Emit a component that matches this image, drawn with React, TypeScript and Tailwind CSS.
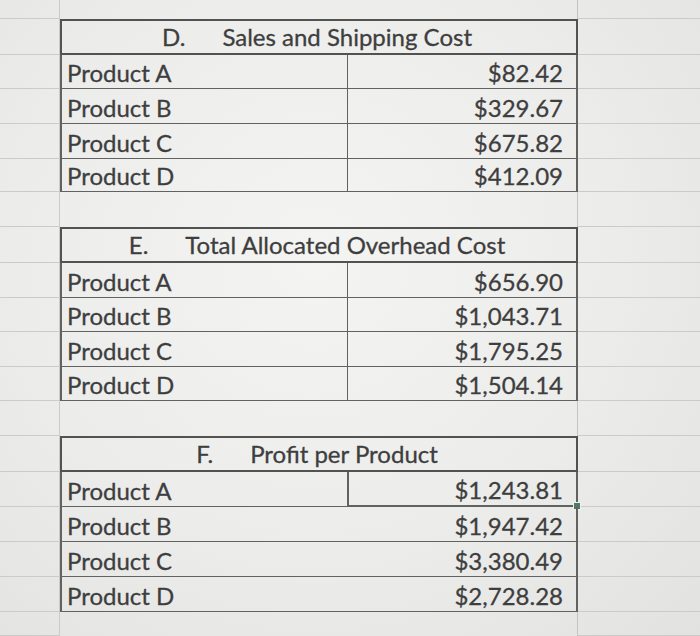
import React from 'react'

type Section = {
  letter: string
  title: string
  heights: string[]
  rows: [string, string][]
  divider: boolean
}

const sections: Section[] = [
  {
    letter: 'D.',
    title: 'Sales and Shipping Cost',
    heights: ['h-[36px]', 'h-[34px]', 'h-[35px]', 'h-[35px]', 'h-[33px]'],
    rows: [
      ['Product A', '$82.42'],
      ['Product B', '$329.67'],
      ['Product C', '$675.82'],
      ['Product D', '$412.09'],
    ],
    divider: true,
  },
  {
    letter: 'E.',
    title: 'Total Allocated Overhead Cost',
    heights: ['h-[36px]', 'h-[35px]', 'h-[34px]', 'h-[35px]', 'h-[34px]'],
    rows: [
      ['Product A', '$656.90'],
      ['Product B', '$1,043.71'],
      ['Product C', '$1,795.25'],
      ['Product D', '$1,504.14'],
    ],
    divider: true,
  },
  {
    letter: 'F.',
    title: 'Profit per Product',
    heights: ['h-[36px]', 'h-[35px]', 'h-[35px]', 'h-[35px]', 'h-[35px]'],
    rows: [
      ['Product A', '$1,243.81'],
      ['Product B', '$1,947.42'],
      ['Product C', '$3,380.49'],
      ['Product D', '$2,728.28'],
    ],
    divider: false,
  },
]

const grid = 'grid grid-cols-[60px_287px_231px_1fr]'
const gutterLeft = 'border-b border-r border-[#cbcbcb]'
const gutterRight = 'border-b border-[#cbcbcb]'

function BlankRow({ h }: { h: string }) {
  return (
    <div className={`${grid} ${h}`}>
      <div className={gutterLeft} />
      <div className="col-span-2 border-r border-[#c4c4c4]" />
      <div className={gutterRight} />
    </div>
  )
}

function Table({ s }: { s: Section }) {
  return (
    <>
      <div className={`${grid} ${s.heights[0]}`}>
        <div className={gutterLeft} />
        <div className="col-span-2 flex items-end justify-center gap-[37px] border-2 border-[#525252] pb-[4px] pr-[4px]">
          <span>{s.letter}</span>
          <span>{s.title}</span>
        </div>
        <div className={gutterRight} />
      </div>
      {s.rows.map(([name, amount], i) => {
        const selected = !s.divider && i === 0
        return (
          <div key={name} className={`${grid} ${s.heights[i + 1]}`}>
            <div className={gutterLeft} />
            <div className="flex items-end border-b border-l-2 border-[#626262] pb-[3px] pl-[5px]">{name}</div>
            <div
              className={`relative flex items-end justify-end border-b border-r-2 border-[#626262] pb-[3px] pr-[13px] ${
                s.divider ? 'border-l' : ''
              } ${selected ? 'border-l-2 border-b-2 border-[#4c5a53]' : ''}`}
            >
              {amount}
              {selected && (
                <span className="absolute -bottom-[5px] -right-[5px] h-[8px] w-[8px] border border-[#eef0ee] bg-[#4f7a66]" />
              )}
            </div>
            <div className={gutterRight} />
          </div>
        )
      })}
    </>
  )
}

export default function App() {
  return (
    <div
      className="h-[636px] w-[700px] overflow-hidden bg-[radial-gradient(ellipse_at_45%_40%,#f4f4f3_0%,#ececeb_55%,#e2e2e1_100%)] text-[24px] leading-none text-[#3e3e3e] [-webkit-text-stroke:0.3px_#3e3e3e]"
      style={{ fontFamily: 'Lato, "Open Sans", sans-serif' }}
    >
      <BlankRow h="h-[19px]" />
      <Table s={sections[0]} />
      <BlankRow h="h-[35px]" />
      <Table s={sections[1]} />
      <BlankRow h="h-[35px]" />
      <Table s={sections[2]} />
      <BlankRow h="h-[24px]" />
    </div>
  )
}
